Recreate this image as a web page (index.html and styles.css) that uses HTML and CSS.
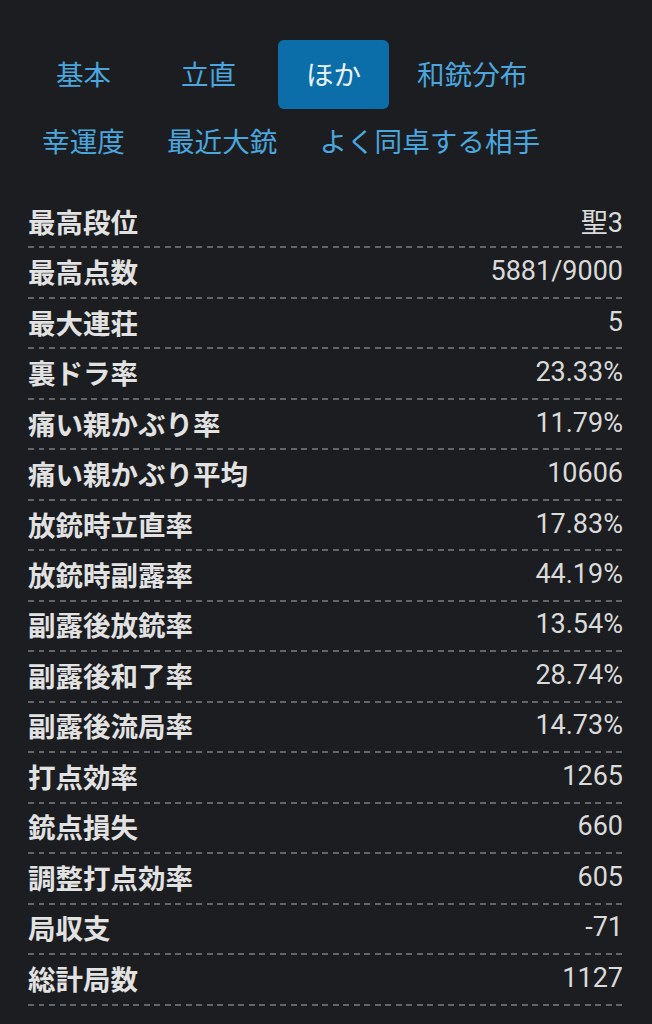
FILE: index.html
```html
<!DOCTYPE html>
<html lang="ja">
<head>
  <meta charset="UTF-8">
  <title>ほか</title>
  <link rel="stylesheet" href="styles.css">
</head>
<body>
  <div class="page">
    <div class="tabs">
      <div class="tab">基本</div>
      <div class="tab">立直</div>
      <div class="tab active">ほか</div>
      <div class="tab">和銃分布</div>
      <div class="tab">幸運度</div>
      <div class="tab">最近大銃</div>
      <div class="tab">よく同卓する相手</div>
    </div>

    <div class="stats">
      <div class="row"><span class="label">最高段位</span><span class="value">聖3</span></div>
      <div class="row"><span class="label">最高点数</span><span class="value">5881/9000</span></div>
      <div class="row"><span class="label">最大連荘</span><span class="value">5</span></div>
      <div class="row"><span class="label">裏ドラ率</span><span class="value">23.33%</span></div>
      <div class="row"><span class="label">痛い親かぶり率</span><span class="value">11.79%</span></div>
      <div class="row"><span class="label">痛い親かぶり平均</span><span class="value">10606</span></div>
      <div class="row"><span class="label">放銃時立直率</span><span class="value">17.83%</span></div>
      <div class="row"><span class="label">放銃時副露率</span><span class="value">44.19%</span></div>
      <div class="row"><span class="label">副露後放銃率</span><span class="value">13.54%</span></div>
      <div class="row"><span class="label">副露後和了率</span><span class="value">28.74%</span></div>
      <div class="row"><span class="label">副露後流局率</span><span class="value">14.73%</span></div>
      <div class="row"><span class="label">打点効率</span><span class="value">1265</span></div>
      <div class="row"><span class="label">銃点損失</span><span class="value">660</span></div>
      <div class="row"><span class="label">調整打点効率</span><span class="value">605</span></div>
      <div class="row"><span class="label">局収支</span><span class="value">-71</span></div>
      <div class="row"><span class="label">総計局数</span><span class="value">1127</span></div>
    </div>
  </div>
</body>
</html>
```

FILE: styles.css
```css
html, body {
  margin: 0;
  height: 100%;
  background-color: #1b1d20;
}

body {
  font-family: "Noto Sans CJK JP", "Noto Sans", sans-serif;
  overflow: hidden;
}

.page {
  padding: 40px 29px 0 28px;
}

.tabs {
  display: flex;
  flex-wrap: wrap;
  column-gap: 14px;
}

.tab {
  min-width: 111px;
  height: 69px;
  box-sizing: border-box;
  padding: 0 14px 4px;
  display: flex;
  align-items: center;
  justify-content: center;
  font-size: 27.6px;
  color: #4aa6de;
  border-radius: 6px;
}

.tab:nth-child(n+5) {
  padding-bottom: 8px;
}

.tab.active {
  background-color: #0b6ea9;
  color: #e9f1f8;
}

.stats {
  margin-top: 20px;
}

.row {
  height: 50.47px;
  box-sizing: border-box;
  display: flex;
  justify-content: space-between;
  align-items: center;
  padding-bottom: 5px;
  background-image: repeating-linear-gradient(to right, #62656a 0 6px, transparent 6px 10.5px);
  background-size: 100% 2px;
  background-position: left bottom;
  background-repeat: no-repeat;
}

.label {
  font-size: 27.5px;
  font-weight: bold;
  color: #e2e2e2;
}

.value {
  font-family: Roboto, "Noto Sans CJK JP", sans-serif;
  font-size: 27px;
  color: #dadada;
}
```
